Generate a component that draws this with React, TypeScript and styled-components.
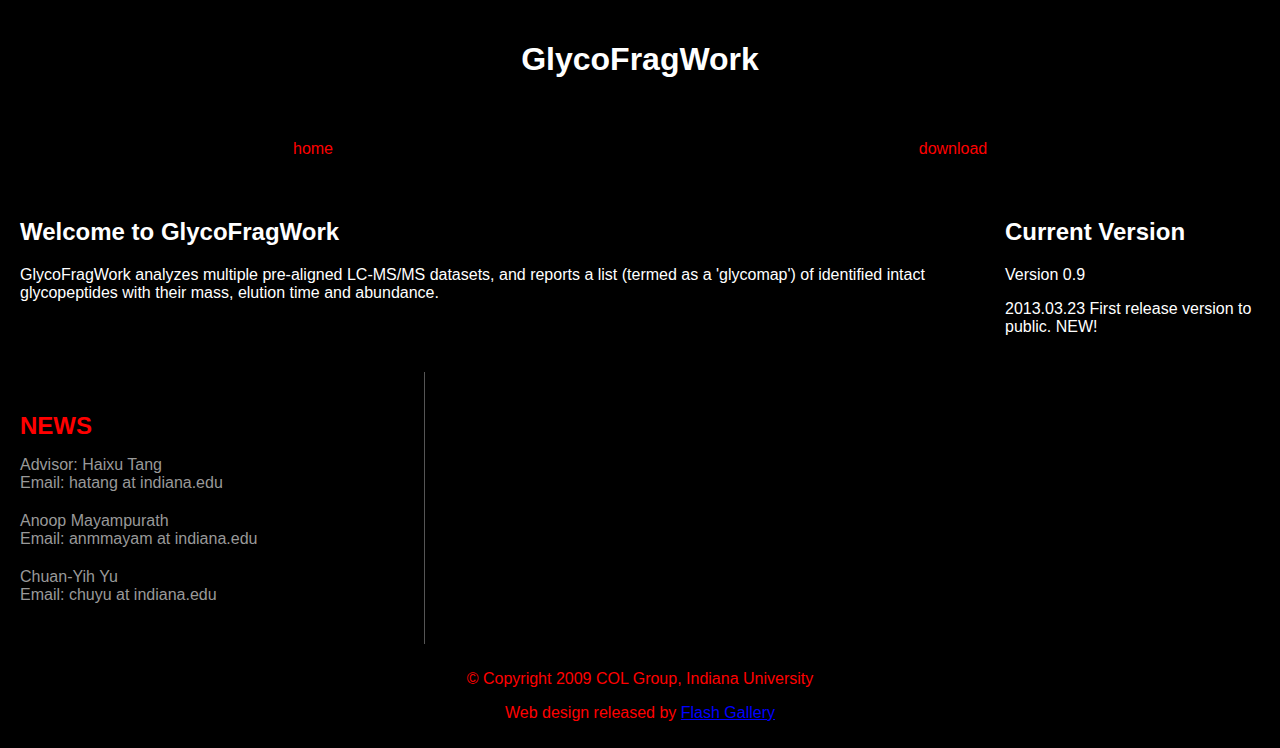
import React from "react";
import styled, { createGlobalStyle } from "styled-components";

const Global = createGlobalStyle`
  html, body {
    margin: 0;
    padding: 0;
    background: #000;
  }
  body {
    font-family: "Liberation Sans", Arial, sans-serif;
    font-size: 16px;
    color: #fff;
  }
`;

const Page = styled.div`
  width: 1280px;
  background: #000;
`;

const Header = styled.header`
  padding-top: 41px;
  text-align: center;
`;

const Title = styled.h1`
  margin: 0;
  font-size: 32px;
  line-height: 37px;
  font-weight: bold;
  color: #fff;
`;

const Nav = styled.nav`
  display: grid;
  grid-template-columns: 626px 626px;
  column-gap: 14px;
  padding-top: 62px;
  height: 18px;
`;

const NavLink = styled.a`
  text-align: center;
  color: #ff0000;
  text-decoration: none;
  line-height: 18px;
`;

const Main = styled.section`
  display: grid;
  grid-template-columns: 1fr 255px;
  column-gap: 40px;
  padding: 0 20px;
  margin-top: 60px;
`;

const Column = styled.div``;

const Heading = styled.h2<{ $red?: boolean }>`
  margin: 0 0 20px;
  font-size: 24px;
  line-height: 28px;
  font-weight: bold;
  color: ${(p) => (p.$red ? "#ff0000" : "#fff")};
`;

const Para = styled.p`
  margin: 0 0 16px;
  line-height: 18px;
`;

const Lower = styled.section`
  display: grid;
  grid-template-columns: 425px 1fr;
  margin-top: 20px;
`;

const NewsColumn = styled.div`
  border-right: 1px solid #555;
  padding: 40px 20px 40px;
`;

const NewsHeading = styled(Heading)`
  margin-bottom: 16px;
`;

const Contact = styled.p`
  margin: 0 0 20px;
  line-height: 18px;
  color: #999;
  &:last-child {
    margin-bottom: 0;
  }
`;

const Footer = styled.footer`
  text-align: center;
  color: #ff0000;
  padding-top: 26px;
  padding-bottom: 20px;
`;

const FootLine = styled.p`
  margin: 0 0 16px;
  line-height: 18px;
  &:last-child {
    margin-bottom: 0;
  }
`;

const BlueLink = styled.a`
  color: #0000ff;
  text-decoration: underline;
`;

const contacts = [
  ["Advisor: Haixu Tang", "Email: hatang at indiana.edu"],
  ["Anoop Mayampurath", "Email: anmmayam at indiana.edu"],
  ["Chuan-Yih Yu", "Email: chuyu at indiana.edu"],
];

export default function App() {
  return (
    <Page>
      <Global />
      <Header>
        <Title>GlycoFragWork</Title>
      </Header>
      <Nav>
        <NavLink href="#">home</NavLink>
        <NavLink href="#">download</NavLink>
      </Nav>
      <Main>
        <Column>
          <Heading>Welcome to GlycoFragWork</Heading>
          <Para>
            GlycoFragWork analyzes multiple pre-aligned LC-MS/MS datasets, and reports a list
            (termed as a 'glycomap') of identified intact glycopeptides with their mass, elution
            time and abundance.
          </Para>
        </Column>
        <Column>
          <Heading>Current Version</Heading>
          <Para>Version 0.9</Para>
          <Para>2013.03.23 First release version to public. NEW!</Para>
        </Column>
      </Main>
      <Lower>
        <NewsColumn>
          <NewsHeading $red>NEWS</NewsHeading>
          {contacts.map(([name, mail]) => (
            <Contact key={name}>
              {name}
              <br />
              {mail}
            </Contact>
          ))}
        </NewsColumn>
        <div />
      </Lower>
      <Footer>
        <FootLine>© Copyright 2009 COL Group, Indiana University</FootLine>
        <FootLine>
          Web design released by <BlueLink href="#">Flash Gallery</BlueLink>
        </FootLine>
      </Footer>
    </Page>
  );
}
